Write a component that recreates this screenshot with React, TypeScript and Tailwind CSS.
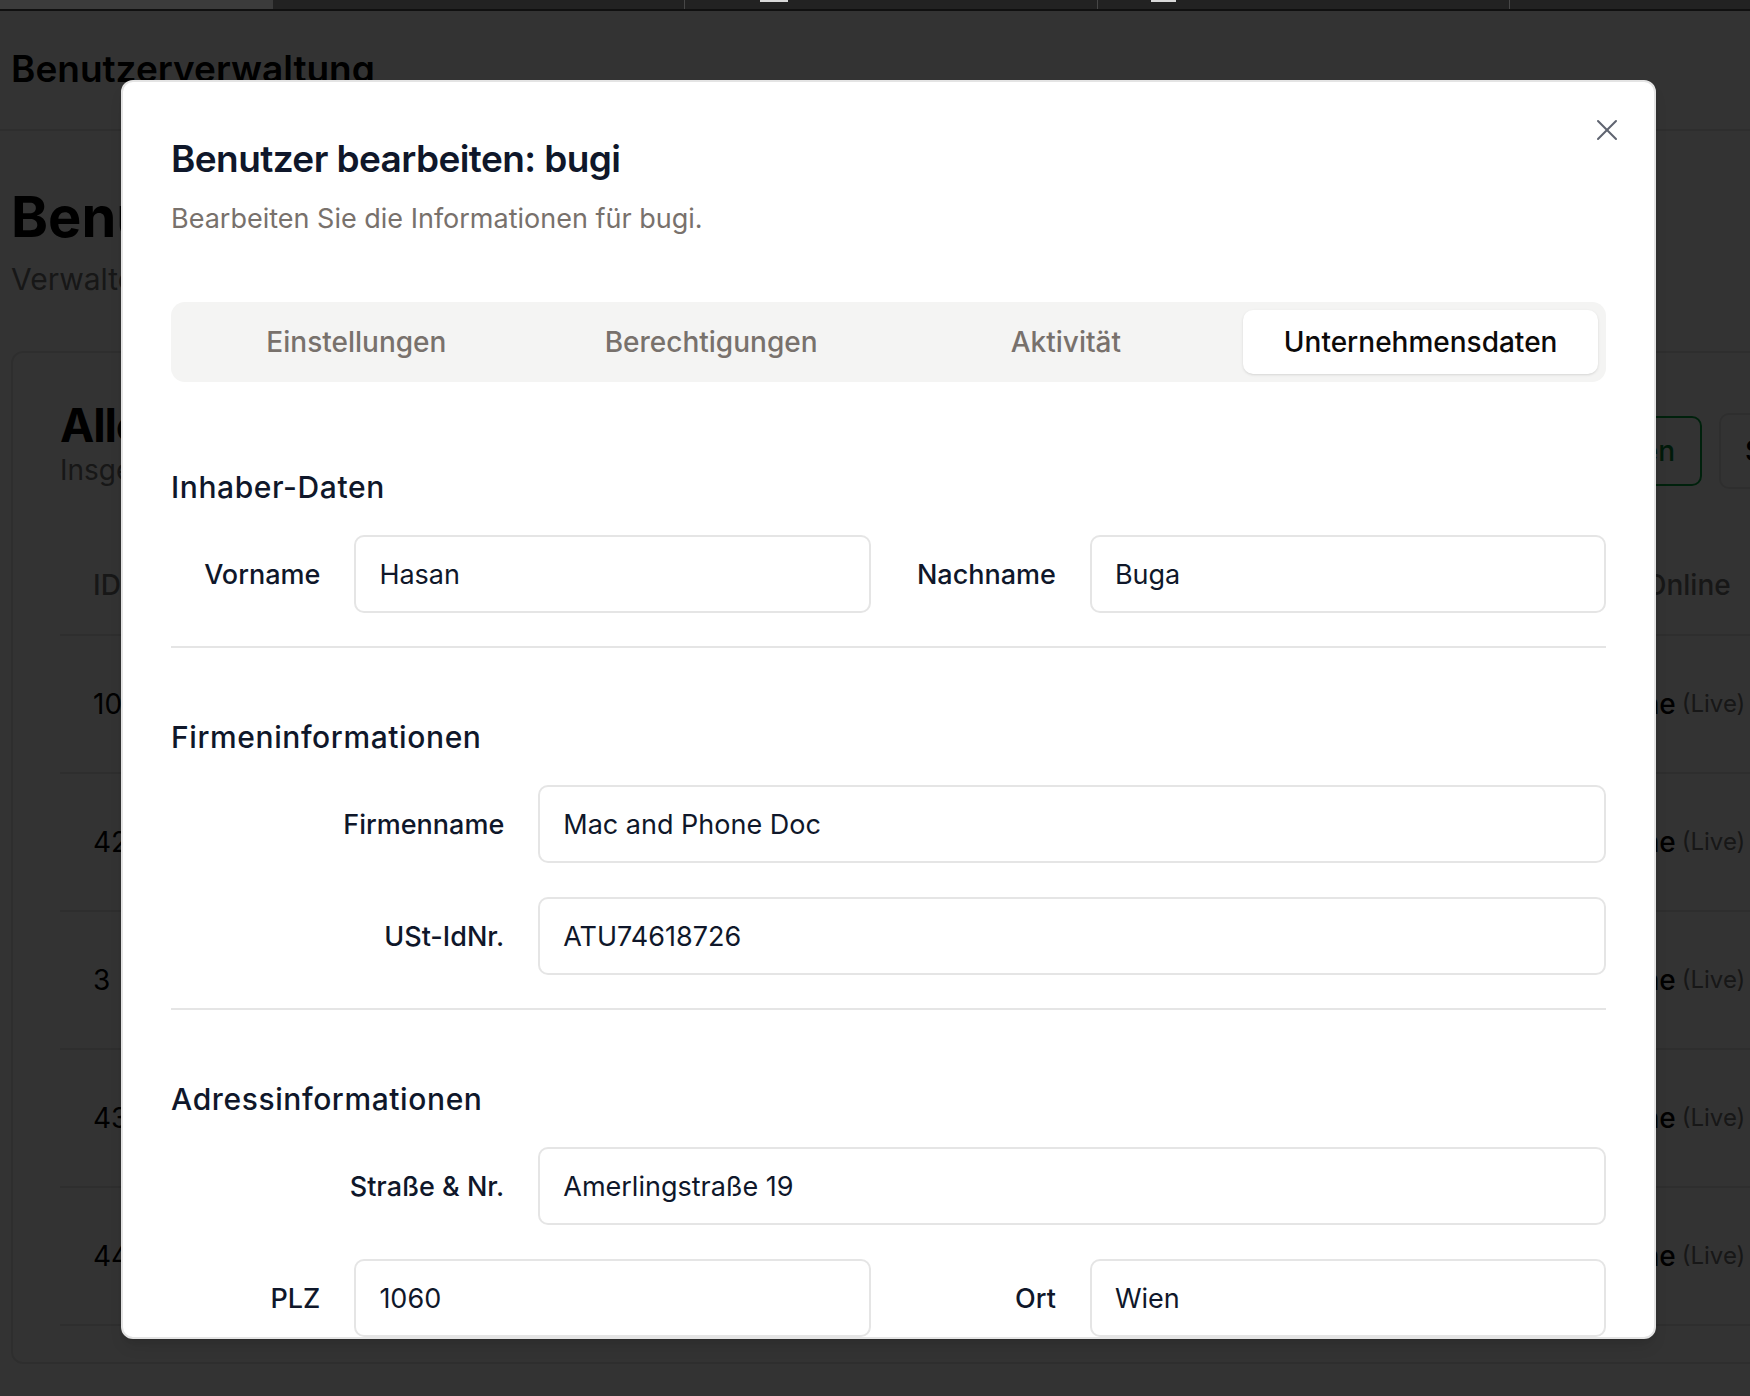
import { X } from "lucide-react";

const TABS = ["Einstellungen", "Berechtigungen", "Aktivität", "Unternehmensdaten"];
const USER_IDS = ["10", "42", "3", "43", "44"];

function Label({ children }: { children: React.ReactNode }) {
  return (
    <label className="text-right text-[27px] font-medium leading-none text-[#0f172a]">
      {children}
    </label>
  );
}

function TextInput({ value }: { value: string }) {
  return (
    <input
      readOnly
      value={value}
      className="col-span-3 h-[78px] w-full rounded-[10px] border-2 border-[#e5e5e5] bg-white px-[23px] text-[27px] text-[#0f172a] outline-none"
    />
  );
}

// label + input on a 4-column grid, label takes one column
function Field({ label, value }: { label: string; value: string }) {
  return (
    <div className="grid grid-cols-4 items-center gap-x-[34px]">
      <Label>{label}</Label>
      <TextInput value={value} />
    </div>
  );
}

function FieldPair({ left, right }: { left: [string, string]; right: [string, string] }) {
  return (
    <div className="grid grid-cols-2 gap-x-[36px]">
      <Field label={left[0]} value={left[1]} />
      <Field label={right[0]} value={right[1]} />
    </div>
  );
}

function Section({
  title,
  className,
  children,
  divider = true,
}: {
  title: string;
  className: string;
  children: React.ReactNode;
  divider?: boolean;
}) {
  return (
    <section className={className}>
      <h3 className="text-[30px] font-medium leading-none tracking-[0.02em] text-[#0f172a]">
        {title}
      </h3>
      <div className="mt-[33px] flex flex-col gap-[34px]">{children}</div>
      {divider && <div className="mt-[33px] h-[2px] bg-[#e5e5e5]" />}
    </section>
  );
}

function BrowserStrip() {
  return (
    <div className="flex h-[11px] border-b-2 border-[#101010] bg-[#222222]">
      <div className="w-[273px] bg-[#3b3b3b]" />
      <div className="w-[411px]" />
      <div className="w-[413px] border-l border-[#474747]">
        <div className="ml-[75px] h-[2px] w-[28px] bg-[#d9d9d9]" />
      </div>
      <div className="w-[412px] border-l border-[#474747]">
        <div className="ml-[53px] h-[2px] w-[25px] bg-[#d9d9d9]" />
      </div>
      <div className="flex-1 border-l border-[#474747]" />
    </div>
  );
}

function UsersPage() {
  return (
    <div>
      <header className="h-[120px] border-b-2 border-[#e5e5e5] pl-[11px] pt-[39px]">
        <h1 className="text-[37px] font-semibold leading-none text-black">Benutzerverwaltung</h1>
      </header>
      <main className="pl-[11px]">
        <h2 className="mt-[58px] text-[56px] font-bold leading-none text-black">Benutzer</h2>
        <p className="mt-[19px] text-[30px] leading-none text-[#737373]">
          Verwalten Sie alle Benutzerkonten und Berechtigungen.
        </p>

        <section className="mt-[57px] w-[1800px] rounded-[12px] border-2 border-[#e5e5e5] pb-[36px] pl-[47px] pt-[49px]">
          <div className="flex items-start">
            <div className="flex w-[1642px] shrink-0 items-start justify-between">
              <div>
                <h3 className="text-[46px] font-bold leading-none tracking-tight text-black">
                  Alle Benutzer
                </h3>
                <p className="mt-[8px] text-[28px] leading-none text-[#737373]">
                  Insgesamt 5 Benutzer
                </p>
              </div>
              <button className="mt-[14px] h-[70px] rounded-[10px] border-2 border-green-600 px-[25px] text-[28px] font-medium text-green-700">
                Benutzer hinzufügen
              </button>
            </div>
            <button className="ml-[17px] mt-[11px] h-[76px] shrink-0 rounded-[10px] border-2 border-[#e5e5e5] px-[24px] text-[28px] font-medium text-black">
              Synchronisieren
            </button>
          </div>

          <div className="mt-[47px]">
            <div className="flex h-[100px] items-center border-b-2 border-[#e5e5e5] text-[28px] font-medium text-[#737373]">
              <span className="w-[1585px] shrink-0 pl-[33px]">ID</span>
              <span>Online</span>
            </div>
            {USER_IDS.map((id) => (
              <div
                key={id}
                className="flex h-[138px] items-center border-b-2 border-[#e5e5e5] text-[28px] text-black"
              >
                <span className="w-[1530px] shrink-0 pl-[33px]">{id}</span>
                <span className="font-medium">Online</span>
                <span className="ml-[6px] text-[24px] text-[#737373]">(Live)</span>
              </div>
            ))}
          </div>
        </section>
      </main>
    </div>
  );
}

function EditUserDialog() {
  return (
    <div className="absolute left-[121px] top-[80px] h-[1259px] w-[1535px] overflow-hidden rounded-[12px] border-2 border-[#e4e4e4] bg-white px-[48px] pt-[58px] shadow-lg">
      <button className="absolute right-[29px] top-[30px] text-[#5f6470]">
        <X size={36} strokeWidth={1.35} />
      </button>

      <h2 className="text-[37px] font-semibold leading-none tracking-[-0.016em] text-[#0f172a]">
        Benutzer bearbeiten: bugi
      </h2>
      <p className="mt-[28px] text-[27px] leading-none text-[#78716c]">
        Bearbeiten Sie die Informationen für bugi.
      </p>

      <div className="mt-[70px] grid h-[80px] grid-cols-4 rounded-[14px] bg-[#f4f4f3] p-[8px]">
        {TABS.map((tab) => {
          const active = tab === "Unternehmensdaten";
          return (
            <button
              key={tab}
              className={
                active
                  ? "rounded-[10px] bg-white text-[28px] font-medium text-[#0c0a09] shadow-sm"
                  : "rounded-[10px] text-[28px] font-medium text-[#78716c]"
              }
            >
              {tab}
            </button>
          );
        })}
      </div>

      <Section title="Inhaber-Daten" className="mt-[90px]">
        <FieldPair left={["Vorname", "Hasan"]} right={["Nachname", "Buga"]} />
      </Section>

      <Section title="Firmeninformationen" className="mt-[74px]">
        <Field label="Firmenname" value="Mac and Phone Doc" />
        <Field label="USt-IdNr." value="ATU74618726" />
      </Section>

      <Section title="Adressinformationen" className="mt-[74px]" divider={false}>
        <Field label="Straße & Nr." value="Amerlingstraße 19" />
        <FieldPair left={["PLZ", "1060"]} right={["Ort", "Wien"]} />
      </Section>
    </div>
  );
}

export default function App() {
  return (
    <div className="relative h-[1396px] w-[1750px] overflow-hidden bg-white font-['Inter',sans-serif]">
      <BrowserStrip />
      <UsersPage />
      <div className="absolute inset-x-0 bottom-0 top-[11px] bg-black/80" />
      <EditUserDialog />
    </div>
  );
}
